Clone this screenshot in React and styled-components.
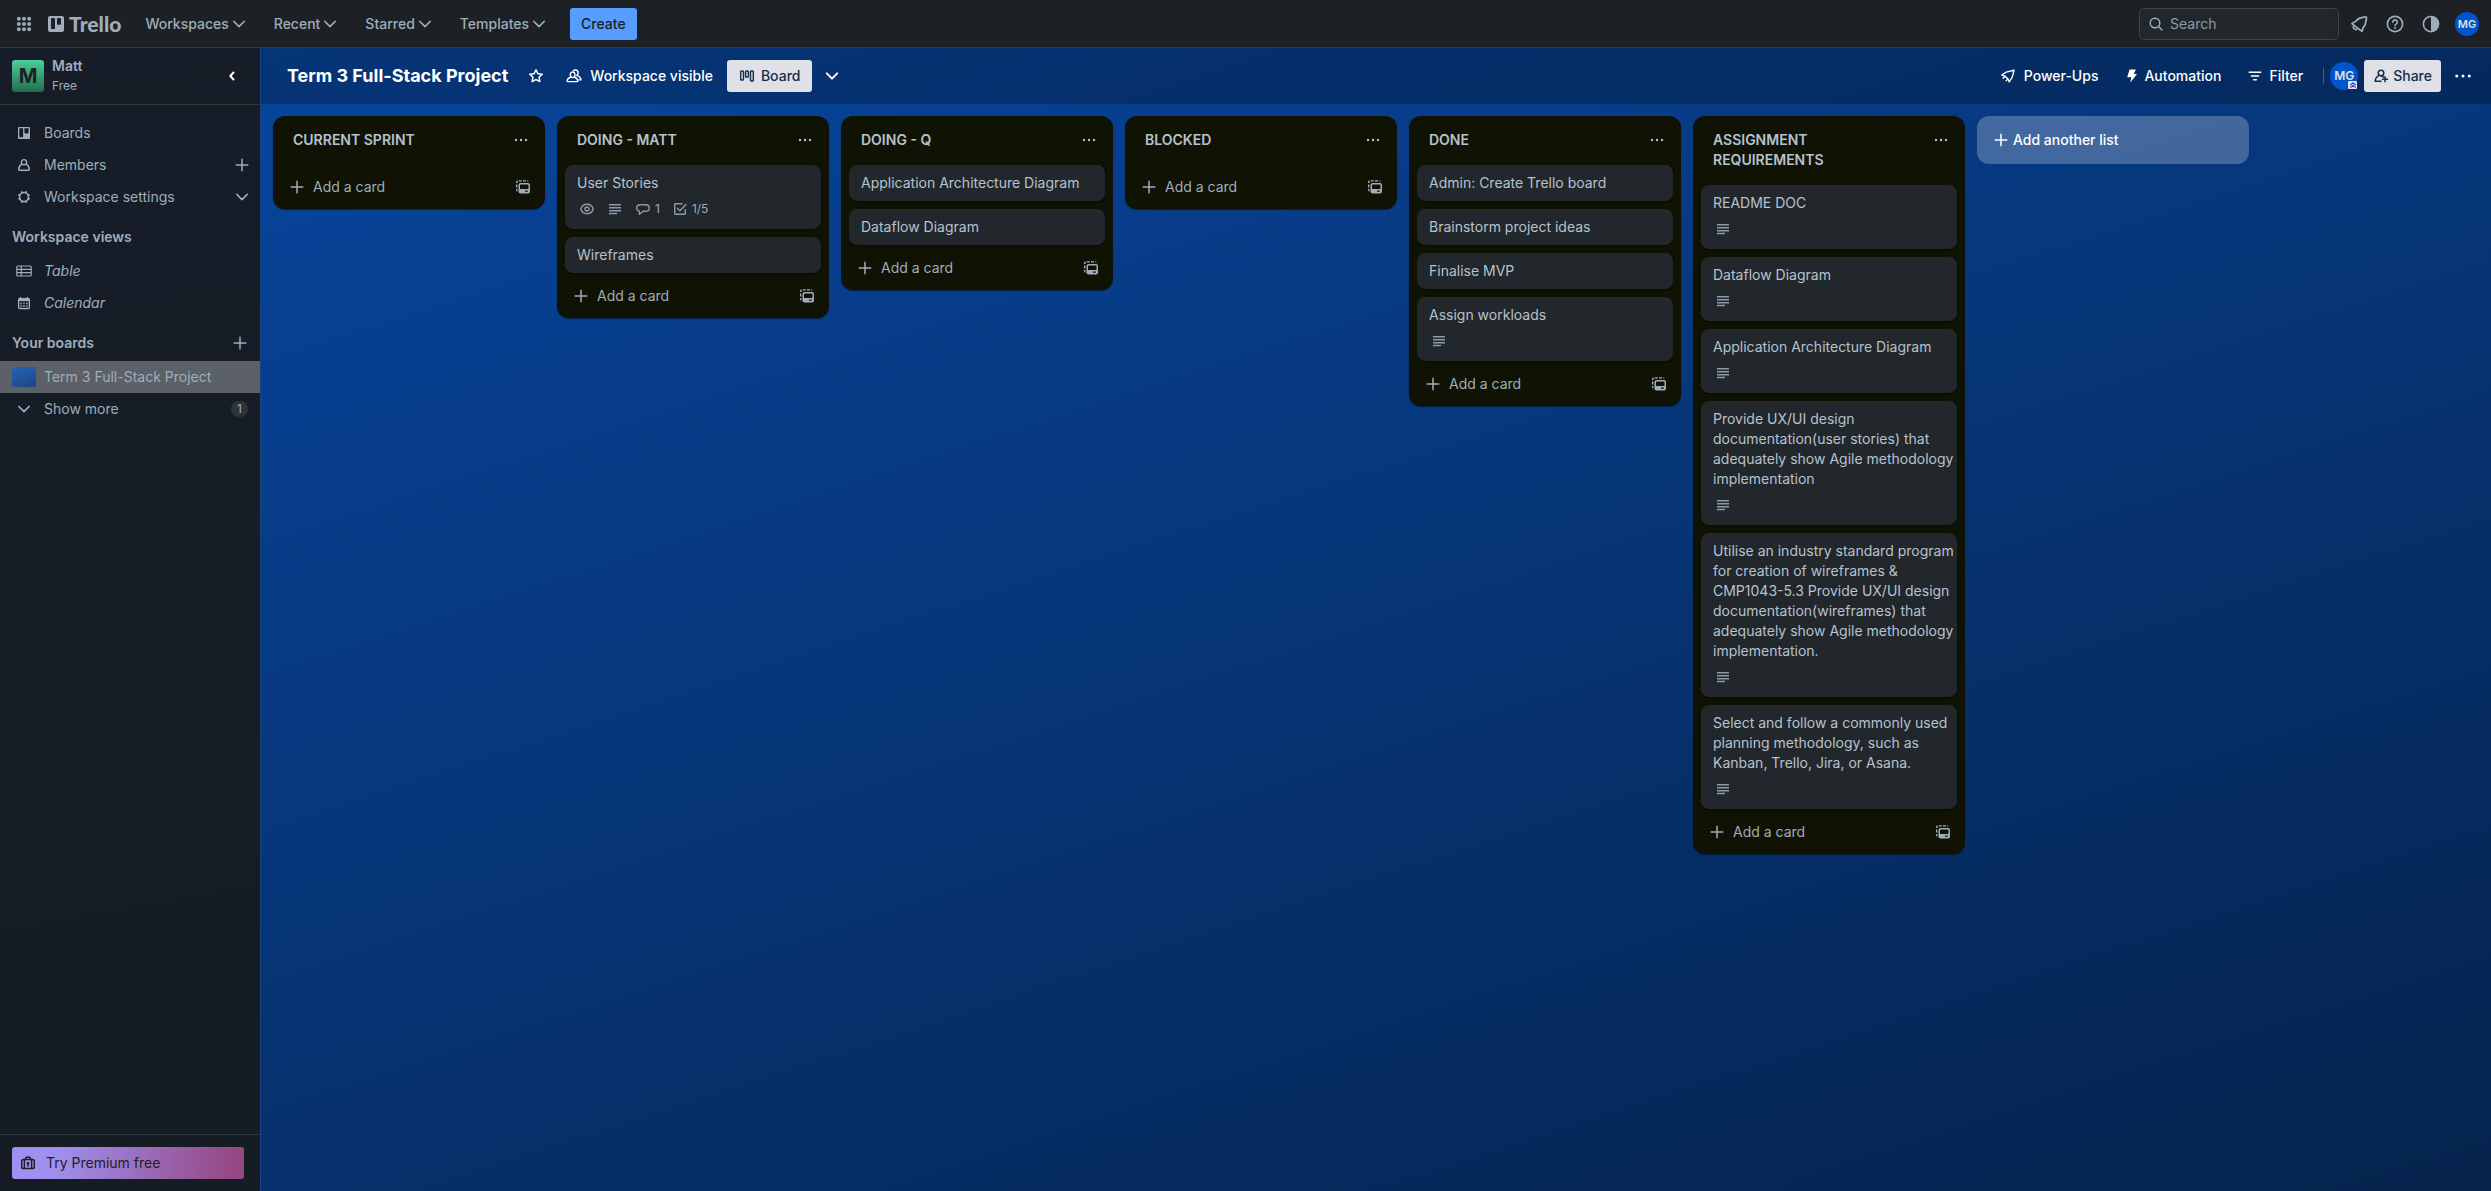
import React from "react";
import styled, { createGlobalStyle, css } from "styled-components";

const c = {
  bar: "#1d2125",
  line: "#31383e",
  subtle: "#9fadbc",
  text: "#b6c2cf",
  list: "#101204",
  card: "#22272b",
  icon: "#8c9bab",
  blue: "#579dff",
  light: "#dfe1e7",
  navy: "#172b4d",
};

const Global = createGlobalStyle`
  * { box-sizing: border-box; }
  body { margin: 0; background: ${c.bar}; }
  body, button, input { font-family: Inter, "Noto Sans", sans-serif; font-size: 14px; line-height: 20px; }
  button { border: 0; padding: 0; margin: 0; background: none; color: inherit; cursor: pointer; }
  a { color: inherit; text-decoration: none; }
  ul, ol { list-style: none; margin: 0; padding: 0; }
  h1, h2, h3, p { margin: 0; }
`;

/* ---------- icons ---------- */

const Svg = styled.svg`
  display: block;
  flex: none;
  width: ${(p) => p.$size || 16}px;
  height: ${(p) => p.$size || 16}px;
  fill: none;
  stroke: currentColor;
  stroke-width: ${(p) => p.$weight || 1.5};
`;

const Icon = ({ size, weight, children }) => (
  <Svg viewBox="0 0 16 16" $size={size} $weight={weight} aria-hidden="true">
    {children}
  </Svg>
);

const Chevron = ({ weight = 1.5, size }) => (
  <Icon weight={weight} size={size}>
    <path d="M2.800 5.400 8 10.600l5.200-5.200" strokeLinecap="round" strokeLinejoin="round" />
  </Icon>
);
const Plus = () => (
  <Icon weight={1.5}>
    <path d="M8 2.200v11.600M2.200 8h11.600" strokeLinecap="round" />
  </Icon>
);
const Dots = ({ size, r = 1.2 }) => (
  <Icon size={size}>
    <g fill="currentColor" stroke="none">
      <circle cx="3" cy="8" r={r} />
      <circle cx="8" cy="8" r={r} />
      <circle cx="13" cy="8" r={r} />
    </g>
  </Icon>
);
const Apps = () => (
  <Icon>
    <g fill="currentColor" stroke="none">
      {[1, 6.2, 11.4].map((y) =>
        [1, 6.2, 11.4].map((x) => <rect key={`${x}-${y}`} x={x} y={y} width="3.600" height="3.600" rx="1.100" />)
      )}
    </g>
  </Icon>
);
const TrelloMark = () => (
  <Icon>
    <path
      fill="currentColor"
      stroke="none"
      fillRule="evenodd"
      d="M2 0h12a2 2 0 0 1 2 2v12a2 2 0 0 1-2 2H2a2 2 0 0 1-2-2V2a2 2 0 0 1 2-2Zm1 2.800v9.400c0 .4.3.7.7.7h2.600c.4 0 .7-.3.7-.7V2.800c0-.4-.3-.7-.7-.7H3.700c-.4 0-.7.3-.7.7Zm6 0v5.200c0 .4.3.7.7.7h2.600c.4 0 .7-.3.7-.7V2.800c0-.4-.3-.7-.7-.7H9.700c-.4 0-.7.3-.7.7Z"
    />
  </Icon>
);
const BoardsIcon = () => (
  <Icon>
    <path
      fill="currentColor"
      stroke="none"
      fillRule="evenodd"
      d="M3 2h10a1 1 0 0 1 1 1v10a1 1 0 0 1-1 1H3a1 1 0 0 1-1-1V3a1 1 0 0 1 1-1Zm.3 1.300v8.200c0 .5.300.8.800.8h2.200c.5 0 .8-.3.8-.8V3.300Zm5.100 0v4.300c0 .5.300.8.800.8h2.600c.5 0 .8-.3.8-.8V3.300Z"
    />
  </Icon>
);
const Person = () => (
  <Icon weight={1.4}>
    <circle cx="8" cy="5.200" r="2.600" />
    <path d="M5.900 7.200C3.800 8.300 2.700 10 2.700 12.600c0 .5.200.7.700.7h9.200c.5 0 .7-.2.700-.7 0-2.600-1.100-4.300-3.200-5.400" />
  </Icon>
);
const Gear = () => (
  <Icon weight={1.5}>
    <circle cx="8" cy="8" r="4.400" />
    <g strokeWidth="2.200">
      {[0, 45, 90, 135, 180, 225, 270, 315].map((a) => (
        <path key={a} d="M8 3.700V2" transform={`rotate(${a + 22} 8 8)`} />
      ))}
    </g>
  </Icon>
);
const TableIcon = () => (
  <Icon weight={1.2}>
    <rect x=".8" y="3" width="14.400" height="10" rx="1" />
    <path d="M1 6.400h14M1 9.600h14M5.200 3v10" />
  </Icon>
);
const CalendarIcon = () => (
  <Icon weight={1.3}>
    <rect x="2.600" y="3.600" width="10.800" height="9.900" rx="1" />
    <path d="M2.600 5h10.800" strokeWidth="2.400" />
    <path d="M4.500 2v2.500M11.500 2v2.500" />
    <path d="M4.300 8.500h1.500M7.200 8.500h1.500M10.100 8.500h1.500M4.300 11h1.500M7.200 11h1.500M10.100 11h1.500" strokeWidth="1.500" />
  </Icon>
);
const Star = () => (
  <Icon weight={1.5}>
    <path
      strokeLinejoin="round"
      d="m8 1.800 1.900 3.900 4.300.6-3.100 3 .7 4.300L8 11.600l-3.800 2 .7-4.300-3.100-3 4.300-.6Z"
    />
  </Icon>
);
const People = () => (
  <Icon weight={1.4}>
    <ellipse cx="6.600" cy="6.800" rx="2.300" ry="2.800" />
    <path d="M5 9C2.700 9.800 1.200 11 1.200 12.900c0 .5.200.7.700.7h9.200c.5 0 .7-.2.700-.7 0-1.900-1.400-3.100-3.500-3.900" />
    <path d="M7 3.200C7.600 2.400 8.500 2 9.400 2c1.600 0 2.700 1.300 2.700 2.900 0 1-.4 1.900-1.100 2.500 2.300.9 3.900 2.300 3.900 4.500h-2.500" />
  </Icon>
);
const BoardView = () => (
  <Icon weight={1.4}>
    <rect x="1.700" y="3" width="2.800" height="9" rx=".8" />
    <rect x="6.600" y="3" width="2.800" height="6" rx=".8" />
    <rect x="11.500" y="3" width="2.800" height="10" rx=".8" />
  </Icon>
);
const Rocket = () => (
  <Icon weight={1.4}>
    <path strokeLinejoin="round" d="M14 2.300 6.200 4.100 1.800 7l3 1.100 3.200 2.800 1.200 3 3-4.500Z" />
    <path d="m4.800 8.300-2 2.400M8 11l-2.300 2.100" />
  </Icon>
);
const Bolt = () => (
  <Icon>
    <path fill="currentColor" stroke="none" d="M5.600 1.500h6.200L9.900 6H13L6.200 14.800 7.400 9.200H3.200Z" />
  </Icon>
);
const FilterIcon = () => (
  <Icon weight={1.5}>
    <path strokeLinecap="round" d="M2.200 4.200h11.600M4.400 8h7.200M6.700 11.800h2.600" />
  </Icon>
);
const AddPerson = () => (
  <Icon weight={1.5}>
    <circle cx="8" cy="5" r="2.800" />
    <path d="M6 7.400C3.600 8.600 2.200 10.300 2.200 13.200H8M8.500 8.200c.8.200 1.400.5 2 .9M12 8.800v5M9.500 11.300h5" strokeLinecap="round" />
  </Icon>
);
const SearchIcon = () => (
  <Icon weight={1.4}>
    <circle cx="7" cy="7" r="4.800" />
    <path d="m10.600 10.600 3.400 3.400" strokeLinecap="round" />
  </Icon>
);
const Bell = () => (
  <Icon size={20} weight={1.4}>
    <path
      strokeLinejoin="round"
      d="M8.600 3.300 13 2.300c.7-.1 1.100.3 1 .9l-.9 4.600c-.2 1.300-.7 1.900-1.600 2.700l-1.200 3.400L2.300 7.700l3.400-2.100c.9-.9 1.600-1.900 2.900-2.300Z"
    />
    <path d="M3.700 9.600c-.9 1.500.8 3.500 2.900 2.600" />
  </Icon>
);
const Help = () => (
  <Icon size={20} weight={1.3}>
    <circle cx="8" cy="8" r="6.100" />
    <path d="M6.200 6.500a1.800 1.800 0 1 1 2.700 1.600c-.6.300-.9.600-.9 1.200" strokeLinecap="round" />
    <circle cx="8" cy="11.200" r=".8" fill="currentColor" stroke="none" />
  </Icon>
);
const Contrast = () => (
  <Icon size={20} weight={1.2}>
    <circle cx="8" cy="8" r="6.100" />
    <path fill="currentColor" stroke="none" d="M8 1.900a6.100 6.100 0 0 1 0 12.200Z" />
  </Icon>
);
const Eye = () => (
  <Icon weight={1.4}>
    <path d="M1.800 8c1-3 3.200-4.700 6.200-4.700S13.200 5 14.200 8c-1 3-3.200 4.700-6.200 4.700S2.800 11 1.800 8Z" />
    <circle cx="8" cy="8" r="2" />
  </Icon>
);
const Lines = () => (
  <Icon weight={1.5}>
    <path d="M2 3.700h12M2 6.700h12M2 9.700h12M2 12.500h8" />
  </Icon>
);
const Comment = () => (
  <Icon weight={1.4}>
    <path
      strokeLinejoin="round"
      d="M4.400 10.200C2.700 9.700 1.700 8.700 1.700 7c0-2 1.600-3.300 3.800-3.300h5c2.200 0 3.800 1.300 3.800 3.300s-1.600 3.300-3.800 3.300H8.300l-3.900 3Z"
    />
  </Icon>
);
const Check = () => (
  <Icon weight={1.4}>
    <path d="M10.600 2.700H3.400a.7.7 0 0 0-.7.7v9.200c0 .4.3.7.7.7h9.200c.4 0 .7-.3.7-.7V8.200" />
    <path d="m5.400 7.300 2.500 2.500 6-6.300" strokeLinecap="round" strokeLinejoin="round" />
  </Icon>
);
const Template = () => (
  <Icon>
    <path
      fill="currentColor"
      stroke="none"
      fillRule="evenodd"
      d="M5.500 4h7.500a2 2 0 0 1 2 2v6.500a2 2 0 0 1-2 2H5.500a2 2 0 0 1-2-2V6a2 2 0 0 1 2-2Zm.2 1.500c-.4 0-.7.3-.7.700V10h8.500V6.200c0-.4-.3-.7-.7-.7Zm4.300 6v1.200h2.800v-1.200Z"
    />
    <path
      fill="currentColor"
      stroke="none"
      d="M1 3a2 2 0 0 1 1.600-1.800V4H1Zm0 2.500h1.400v3H1ZM1 10h1.400v2.800A2 2 0 0 1 1 11ZM3.800 1.200h3v1.400h-3Zm4.200 0h3v1.400H8Zm4.200 0a2 2 0 0 1 1.600 1.400h-1.600Z"
    />
  </Icon>
);
const Briefcase = () => (
  <Icon weight={1.5}>
    <rect x="1.700" y="4.600" width="12.600" height="9" rx="1.800" />
    <path d="M5.600 4.400V3.300c0-.6.400-1 1-1h2.800c.6 0 1 .4 1 1v1.100M4.400 5v8.300M11.600 5v8.300" />
    <path d="M8 7v4.500M6.700 8.200h2.600" strokeWidth="1.600" />
  </Icon>
);
const ChevronsUp = () => (
  <Svg viewBox="0 0 10 8" $size={8} $weight={1.3} aria-hidden="true">
    <path d="M1.500 4 5 1.300 8.500 4M1.500 7.200 5 4.500l3.500 2.700" />
  </Svg>
);

/* ---------- layout ---------- */

const Page = styled.div`
  min-height: 100vh;
  display: flex;
  flex-direction: column;
  background: linear-gradient(162deg, #0848a4, #05234c);
`;

const TopBar = styled.header`
  display: flex;
  align-items: center;
  height: 48px;
  padding: 0 8px;
  background: ${c.bar};
  border-bottom: 1px solid ${c.line};
  color: ${c.subtle};
`;

const IconButton = styled.button`
  display: grid;
  place-items: center;
  flex: none;
  width: ${(p) => p.$w || 32}px;
  height: 32px;
  border-radius: 3px;
  color: ${(p) => p.$color || "inherit"};
`;

const Logo = styled.a`
  display: flex;
  align-items: center;
  gap: 5px;
  padding: 0 8px;
  font: 900 21px/32px Lato, "Open Sans", sans-serif;
  color: ${c.subtle};
`;

const MainNav = styled.nav`
  display: flex;
  flex: 1;
  margin-left: 4px;
  gap: 4px;
`;

const NavButton = styled.button`
  display: flex;
  align-items: center;
  gap: 2px;
  height: 32px;
  padding: 0 11px 0 12px;
  font-weight: 500;
`;

const CreateButton = styled.button`
  height: 32px;
  margin-left: 8px;
  padding: 0 11px;
  border-radius: 3px;
  background: ${c.blue};
  color: ${c.bar};
  font-weight: 500;
`;

const SearchBox = styled.label`
  display: flex;
  align-items: center;
  gap: 6px;
  width: 200px;
  height: 32px;
  margin-right: 4px;
  padding: 0 8px;
  border: 1px solid #3a444c;
  border-radius: 5px;
  background: ${c.card};
`;

const SearchInput = styled.input`
  flex: 1;
  min-width: 0;
  border: 0;
  padding: 0;
  outline: 0;
  background: none;
  color: ${c.text};
  &::placeholder {
    color: ${c.icon};
    opacity: 1;
  }
`;

const TopActions = styled.div`
  display: flex;
  gap: 4px;
`;

const Avatar = styled.span`
  position: relative;
  display: grid;
  place-items: center;
  width: ${(p) => p.$size}px;
  height: ${(p) => p.$size}px;
  border-radius: 50%;
  background: #0055cc;
  color: #dee4ea;
  font-size: ${(p) => (p.$size > 24 ? 12 : 11)}px;
  font-weight: 600;
`;

const AdminBadge = styled.span`
  position: absolute;
  right: 1px;
  bottom: 1px;
  display: grid;
  place-items: center;
  width: 9px;
  height: 8px;
  border-radius: 1px;
  background: #dfe1f5;
  color: #403294;
`;

const Body = styled.div`
  display: flex;
  flex: 1;
`;

const Sidebar = styled.aside`
  display: flex;
  flex-direction: column;
  flex: none;
  width: 261px;
  border-right: 1px solid #19437f;
  background: linear-gradient(170deg, #171d28, #161c23);
  color: ${c.subtle};
`;

const SideHead = styled.div`
  display: flex;
  align-items: center;
  gap: 8px;
  height: 57px;
  padding: 0 12px;
  border-bottom: 1px solid ${c.line};
`;

const WorkspaceLogo = styled.span`
  display: grid;
  place-items: center;
  width: 32px;
  height: 32px;
  border-radius: 3px;
  background: linear-gradient(#4bce97, #216e4e);
  color: ${c.bar};
  font-size: 20px;
  font-weight: 700;
`;

const WorkspaceName = styled.div`
  flex: 1;
  font-weight: 600;
`;

const Plan = styled.p`
  font-size: 12px;
  font-weight: 400;
`;

const SideNav = styled.nav`
  flex: 1;
  padding-top: 12px;
`;

const SideRow = styled.li`
  display: flex;
  align-items: center;
  height: 32px;
  padding: 0 6px 0 12px;
  background: ${(p) => (p.$active ? "#5c6067" : "none")};
`;

const SideLink = styled.a`
  display: flex;
  align-items: center;
  flex: 1;
  gap: 8px;
  font-style: ${(p) => (p.$italic ? "italic" : "normal")};
`;

const Slot = styled.span`
  display: grid;
  place-items: center;
  width: 24px;
  height: 20px;
`;

const Thumb = styled(Slot)`
  border-radius: 2px;
  background: linear-gradient(160deg, #2464be, #22447c);
`;

const SideAction = styled.button`
  display: grid;
  place-items: center;
  width: 24px;
  height: 24px;
`;

const SideTitle = styled.div`
  display: flex;
  align-items: center;
  justify-content: space-between;
  height: 42px;
  padding: 6px 8px 0 12px;
`;

const SideHeading = styled.h2`
  font-size: 14px;
  line-height: 20px;
  font-weight: 600;
`;

const Count = styled.span`
  margin-right: 6px;
  padding: 0 6px;
  border-radius: 8px;
  background: #2c333a;
  font-size: 12px;
  line-height: 16px;
`;

const SideFoot = styled.div`
  padding: 12px 16px 12px 12px;
  border-top: 1px solid ${c.line};
`;

const PremiumButton = styled.button`
  display: flex;
  align-items: center;
  gap: 10px;
  width: 100%;
  height: 32px;
  padding: 0 8px;
  border-radius: 3px;
  background: linear-gradient(100deg, #9f8fef 20%, #964a85 92%);
  color: ${c.bar};
`;

const Main = styled.main`
  display: flex;
  flex-direction: column;
  flex: 1;
  min-width: 0;
`;

const BoardBar = styled.div`
  display: flex;
  align-items: center;
  height: 56px;
  padding: 0 12px 0 26px;
  background: rgba(0, 0, 0, 0.24);
  color: #fff;
`;

const BoardTitle = styled.h1`
  margin-right: 8px;
  font-size: 18px;
  line-height: 32px;
  font-weight: 700;
`;

const BarButton = styled.button`
  display: flex;
  align-items: center;
  gap: ${(p) => p.$gap || 6}px;
  height: 32px;
  padding: 0 ${(p) => p.$pad || 10}px;
  border-radius: 3px;
  font-weight: 500;
  ${(p) =>
    p.$light &&
    css`
      background: ${c.light};
      color: ${c.navy};
    `}
`;

const BarLeft = styled.div`
  display: flex;
  align-items: center;
  flex: 1;
  gap: 4px;
`;

const BarRight = styled.div`
  display: flex;
  align-items: center;
  gap: 6px;
`;

const Divider = styled.span`
  width: 1px;
  height: 16px;
  margin-left: 4px;
  background: rgba(255, 255, 255, 0.24);
`;

const Lists = styled.ol`
  display: flex;
  align-items: flex-start;
  gap: 12px;
  padding: 12px;
`;

const List = styled.li`
  flex: none;
  width: 272px;
  border-radius: 12px;
  background: ${c.list};
  box-shadow: 0 1px 1px rgba(3, 4, 4, 0.5);
  color: ${c.text};
`;

const ListHead = styled.div`
  display: flex;
  align-items: flex-start;
  justify-content: space-between;
  padding: 8px 8px 9px 20px;
`;

const ListName = styled.h2`
  width: 180px;
  padding: 6px 0;
  font-size: 14px;
  line-height: 20px;
  font-weight: 600;
`;

const Cards = styled.ol`
  display: grid;
  gap: 8px;
  padding: 0 8px 1px;
`;

const CardBox = styled.li`
  padding: 8px 2px 8px 12px;
  border-radius: 8px;
  background: ${c.card};
  box-shadow: 0 1px 1px rgba(3, 4, 4, 0.5);
`;

const Badges = styled.div`
  display: flex;
  gap: 8px;
  padding-top: 4px;
  color: ${c.icon};
`;

const Badge = styled.span`
  display: flex;
  align-items: center;
  gap: 4px;
  height: 24px;
  padding: 0 2px;
  font-size: 12px;
`;

const BadgeText = styled.span`
  color: ${c.subtle};
`;

const ListFoot = styled.div`
  display: flex;
  align-items: center;
  height: 44px;
  padding: 0 6px 0 16px;
  color: ${c.subtle};
`;

const AddCard = styled.button`
  display: flex;
  align-items: center;
  flex: 1;
  gap: 8px;
  height: 32px;
`;

const AddList = styled.button`
  display: flex;
  align-items: center;
  gap: 4px;
  width: 272px;
  height: 48px;
  padding: 0 16px;
  border-radius: 12px;
  background: rgba(255, 255, 255, 0.24);
  color: #fff;
  font-weight: 500;
`;

/* ---------- content ---------- */

const lists = [
  { name: "CURRENT SPRINT", cards: [] },
  {
    name: "DOING - MATT",
    cards: [{ title: "User Stories", watch: true, desc: true, comments: 1, checks: "1/5" }, { title: "Wireframes" }],
  },
  { name: "DOING - Q", cards: [{ title: "Application Architecture Diagram" }, { title: "Dataflow Diagram" }] },
  { name: "BLOCKED", cards: [] },
  {
    name: "DONE",
    cards: [
      { title: "Admin: Create Trello board" },
      { title: "Brainstorm project ideas" },
      { title: "Finalise MVP" },
      { title: "Assign workloads", desc: true },
    ],
  },
  {
    name: "ASSIGNMENT REQUIREMENTS",
    cards: [
      { title: "README DOC", desc: true },
      { title: "Dataflow Diagram", desc: true },
      { title: "Application Architecture Diagram", desc: true },
      {
        title: "Provide UX/UI design documentation(user stories) that adequately show Agile methodology implementation",
        desc: true,
      },
      {
        title:
          "Utilise an industry standard program for creation of wireframes & CMP1043-5.3 Provide UX/UI design documentation(wireframes) that adequately show Agile methodology implementation.",
        desc: true,
      },
      {
        title: "Select and follow a commonly used planning methodology, such as Kanban, Trello, Jira, or Asana.",
        desc: true,
      },
    ],
  },
];

const Card = ({ card }) => (
  <CardBox>
    {card.title}
    {card.desc && (
      <Badges>
        {card.watch && <Badge><Eye /></Badge>}
        <Badge><Lines /></Badge>
        {card.comments && <Badge><Comment /><BadgeText>{card.comments}</BadgeText></Badge>}
        {card.checks && <Badge><Check /><BadgeText>{card.checks}</BadgeText></Badge>}
      </Badges>
    )}
  </CardBox>
);

const SideItem = ({ icon, label, italic, active, children }) => (
  <SideRow $active={active}>
    <SideLink href="#" $italic={italic}>
      {icon}
      {label}
    </SideLink>
    {children}
  </SideRow>
);

export default function App() {
  return (
    <Page>
      <Global />
      <TopBar>
        <IconButton aria-label="More apps"><Apps /></IconButton>
        <Logo href="#"><TrelloMark />Trello</Logo>
        <MainNav>
          {["Workspaces", "Recent", "Starred", "Templates"].map((label) => (
            <NavButton key={label}>{label}<Chevron /></NavButton>
          ))}
          <CreateButton>Create</CreateButton>
        </MainNav>
        <SearchBox>
          <SearchIcon />
          <SearchInput type="search" placeholder="Search" aria-label="Search" />
        </SearchBox>
        <TopActions>
          <IconButton aria-label="Notifications"><Bell /></IconButton>
          <IconButton aria-label="Help"><Help /></IconButton>
          <IconButton aria-label="Theme"><Contrast /></IconButton>
          <IconButton aria-label="Account"><Avatar $size={24}>MG</Avatar></IconButton>
        </TopActions>
      </TopBar>
      <Body>
        <Sidebar>
          <SideHead>
            <WorkspaceLogo>M</WorkspaceLogo>
            <WorkspaceName>Matt<Plan>Free</Plan></WorkspaceName>
            <IconButton $color="#fff" aria-label="Collapse sidebar">
              <Icon weight={2}>
                <path d="M9.500 4.500 6.300 8l3.200 3.500" strokeLinecap="round" strokeLinejoin="round" />
              </Icon>
            </IconButton>
          </SideHead>
          <SideNav>
            <ul>
              <SideItem icon={<Slot><BoardsIcon /></Slot>} label="Boards" />
              <SideItem icon={<Slot><Person /></Slot>} label="Members">
                <SideAction aria-label="Add member"><Plus /></SideAction>
              </SideItem>
              <SideItem icon={<Slot><Gear /></Slot>} label="Workspace settings">
                <SideAction aria-label="Expand settings"><Chevron /></SideAction>
              </SideItem>
            </ul>
            <SideTitle><SideHeading>Workspace views</SideHeading></SideTitle>
            <ul>
              <SideItem icon={<Slot><TableIcon /></Slot>} label="Table" italic />
              <SideItem icon={<Slot><CalendarIcon /></Slot>} label="Calendar" italic />
            </ul>
            <SideTitle>
              <SideHeading>Your boards</SideHeading>
              <SideAction aria-label="Add board"><Plus /></SideAction>
            </SideTitle>
            <ul>
              <SideItem active icon={<Thumb />} label="Term 3 Full-Stack Project" />
              <SideItem icon={<Slot><Chevron /></Slot>} label="Show more"><Count>1</Count></SideItem>
            </ul>
          </SideNav>
          <SideFoot>
            <PremiumButton><Briefcase />Try Premium free</PremiumButton>
          </SideFoot>
        </Sidebar>
        <Main>
          <BoardBar>
            <BarLeft>
              <BoardTitle>Term 3 Full-Stack Project</BoardTitle>
              <IconButton aria-label="Star board"><Star /></IconButton>
              <BarButton $gap={8}><People />Workspace visible</BarButton>
              <BarButton $light $pad={12}><BoardView />Board</BarButton>
              <IconButton aria-label="More views"><Chevron weight={2} /></IconButton>
            </BarLeft>
            <BarRight>
              <BarButton $gap={8}><Rocket />Power-Ups</BarButton>
              <BarButton $gap={4}><Bolt />Automation</BarButton>
              <BarButton><FilterIcon />Filter</BarButton>
              <Divider />
              <Avatar $size={28}>MG<AdminBadge><ChevronsUp /></AdminBadge></Avatar>
              <BarButton $light $gap={4} $pad={9}><AddPerson />Share</BarButton>
              <IconButton aria-label="Board menu"><Dots size={20} /></IconButton>
            </BarRight>
          </BoardBar>
          <Lists>
            {lists.map((list) => (
              <List key={list.name}>
                <ListHead>
                  <ListName>{list.name}</ListName>
                  <IconButton aria-label="List actions"><Dots /></IconButton>
                </ListHead>
                {list.cards.length > 0 && (
                  <Cards>
                    {list.cards.map((card) => <Card key={card.title} card={card} />)}
                  </Cards>
                )}
                <ListFoot>
                  <AddCard><Plus />Add a card</AddCard>
                  <IconButton aria-label="Create from template"><Template /></IconButton>
                </ListFoot>
              </List>
            ))}
            <li><AddList><Plus />Add another list</AddList></li>
          </Lists>
        </Main>
      </Body>
    </Page>
  );
}
